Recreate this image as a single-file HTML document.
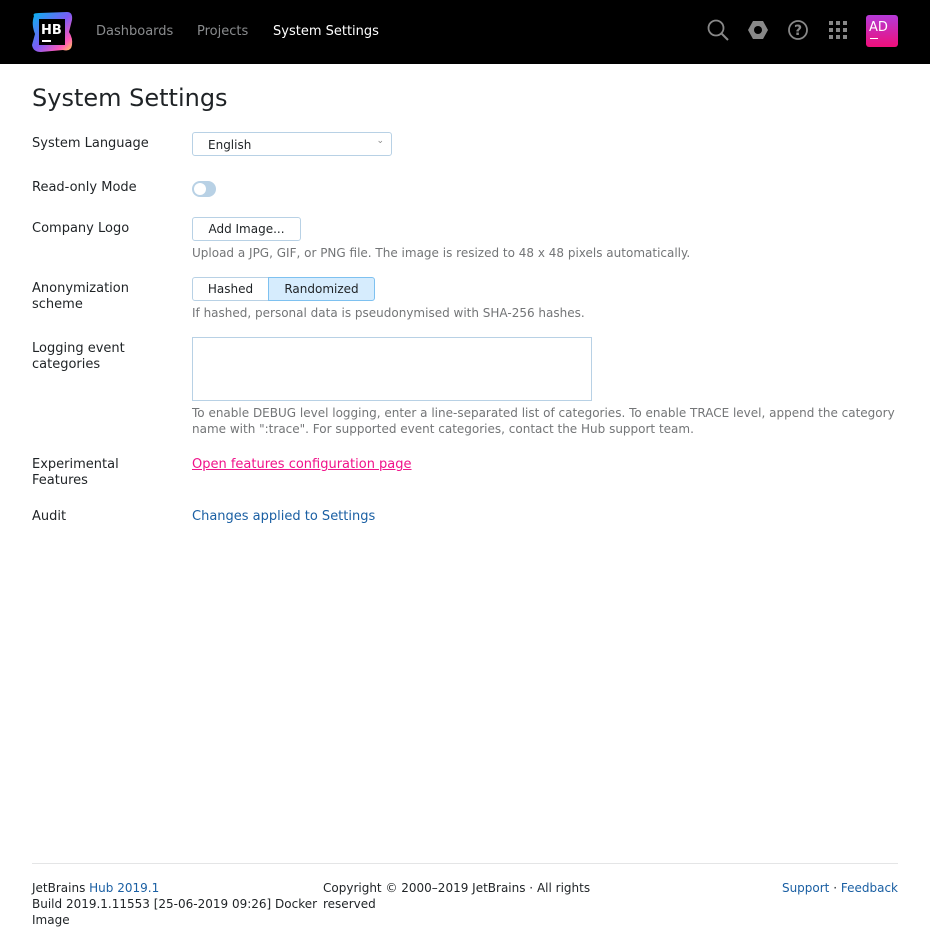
<!DOCTYPE html>
<html><head><meta charset="utf-8"><style>
*{margin:0;padding:0;box-sizing:border-box}
body{width:930px;height:944px;background:#fff;font-family:"DejaVu Sans","Liberation Sans",sans-serif;color:#1f2326;font-size:13px;position:relative;overflow:hidden}
.a{position:absolute;white-space:nowrap}
.hdr{position:absolute;left:0;top:0;width:930px;height:64px;background:#000}
.lbl{position:absolute;left:32px;font-size:13px;line-height:16px;height:16px;color:#1f2326;white-space:nowrap}
.help{font-size:12px;line-height:16px;color:#737577}
</style></head><body>
<div class="hdr">
<svg class="a" style="left:31px;top:12px" width="42" height="41" viewBox="0 0 42 41">
<defs><linearGradient id="g" x1="0" y1="0" x2="1" y2="1"><stop offset="0" stop-color="#00b8f0"/><stop offset="0.5" stop-color="#7b5cf5"/><stop offset="0.8" stop-color="#ff5ab8"/><stop offset="1" stop-color="#ffd84a"/></linearGradient></defs>
<path d="M3 4 Q1 1 8 1 L36 0 Q42 0 41 8 L38 20 Q42 26 41 33 Q40 40 32 38 L10 40 Q2 40 1 33 L4 22 Q0 12 3 4Z" fill="url(#g)"/>
<rect x="8" y="7" width="26" height="26" fill="#000"/>
<text x="10" y="22" fill="#fff" font-family="DejaVu Sans" font-weight="bold" font-size="13">HB</text>
<rect x="11" y="28" width="9" height="2" fill="#fff"/>
</svg>
<div class="a" style="left:96px;top:24px;color:#8a8c8e;font-size:13px">Dashboards</div>
<div class="a" style="left:197px;top:24px;color:#8a8c8e;font-size:13px">Projects</div>
<div class="a" style="left:273px;top:24px;color:#fff;font-size:13px">System Settings</div>
<svg class="a" style="left:706px;top:18px" width="24" height="24" viewBox="0 0 24 24"><circle cx="10" cy="10" r="7.5" fill="none" stroke="#888" stroke-width="1.8"/><path d="M15.5 15.5L22 22" stroke="#888" stroke-width="2"/></svg>
<svg class="a" style="left:747px;top:19px" width="22" height="22" viewBox="0 0 22 22"><path d="M6 2h10l5 9-5 9H6l-5-9z" fill="#888"/><circle cx="11" cy="11" r="4" fill="#000"/></svg>
<svg class="a" style="left:787px;top:19px" width="22" height="22" viewBox="0 0 22 22"><circle cx="11" cy="11" r="9" fill="none" stroke="#888" stroke-width="1.8"/><text x="11" y="16" text-anchor="middle" fill="#888" font-size="14" font-weight="bold" font-family="DejaVu Sans">?</text></svg>
<svg class="a" style="left:828px;top:20px" width="20" height="20" viewBox="0 0 20 20" fill="#888"><rect x="1" y="1" width="4" height="4"/><rect x="8" y="1" width="4" height="4"/><rect x="15" y="1" width="4" height="4"/><rect x="1" y="8" width="4" height="4"/><rect x="8" y="8" width="4" height="4"/><rect x="15" y="8" width="4" height="4"/><rect x="1" y="15" width="4" height="4"/><rect x="8" y="15" width="4" height="4"/><rect x="15" y="15" width="4" height="4"/></svg>
<div class="a" style="left:866px;top:15px;width:32px;height:32px;border-radius:3px;background:linear-gradient(#b53ad8,#ef0f7a)"><div class="a" style="left:3px;top:5px;color:#fff;font-size:13px">AD</div><div class="a" style="left:4px;top:23px;width:8px;height:1px;background:#fff"></div></div>
</div>

<div class="a" style="left:32px;top:84px;font-size:24px;line-height:28px;color:#1f2326">System Settings</div>

<div class="lbl" style="top:136px">System Language</div>
<div class="a" style="left:192px;top:132px;width:200px;height:24px;border:1px solid #b8d1e5;border-radius:3px"><span class="a" style="left:15px;top:4px;font-size:12px;line-height:16px">English</span><span class="a" style="right:7px;top:3px;font-size:9px;color:#888">⌄</span></div>

<div class="lbl" style="top:180px">Read-only Mode</div>
<div class="a" style="left:192px;top:181px;width:24px;height:16px;border-radius:8px;background:#b8d1e5"><div class="a" style="left:2px;top:2px;width:12px;height:12px;border-radius:6px;background:#fff"></div></div>

<div class="lbl" style="top:221px">Company Logo</div>
<div class="a" style="left:192px;top:217px;width:109px;height:24px;border:1px solid #b8d1e5;border-radius:3px;font-size:12px;line-height:22px;text-align:center">Add Image...</div>
<div class="a help" style="left:192px;top:245px">Upload a JPG, GIF, or PNG file. The image is resized to 48 x 48 pixels automatically.</div>

<div class="lbl" style="top:281px">Anonymization</div>
<div class="lbl" style="top:297px">scheme</div>
<div class="a" style="left:192px;top:277px;width:77px;height:24px;border:1px solid #b8d1e5;border-radius:3px 0 0 3px;font-size:12px;line-height:22px;text-align:center">Hashed</div>
<div class="a" style="left:268px;top:277px;width:107px;height:24px;border:1px solid #7ec1f0;background:#d6ecfd;border-radius:0 3px 3px 0;font-size:12px;line-height:22px;text-align:center">Randomized</div>
<div class="a help" style="left:192px;top:305px">If hashed, personal data is pseudonymised with SHA-256 hashes.</div>

<div class="lbl" style="top:341px">Logging event</div>
<div class="lbl" style="top:357px">categories</div>
<div class="a" style="left:192px;top:337px;width:400px;height:64px;border:1px solid #b8d1e5"></div>
<div class="a help" style="left:192px;top:405px">To enable DEBUG level logging, enter a line-separated list of categories. To enable TRACE level, append the category</div>
<div class="a help" style="left:192px;top:421px">name with ":trace". For supported event categories, contact the Hub support team.</div>

<div class="lbl" style="top:457px">Experimental</div>
<div class="lbl" style="top:473px">Features</div>
<div class="a" style="left:192px;top:457px;line-height:16px;color:#f0138a;text-decoration:underline">Open features configuration page</div>

<div class="lbl" style="top:509px">Audit</div>
<div class="a" style="left:192px;top:509px;line-height:16px;color:#1a5fa3">Changes applied to Settings</div>

<div class="a" style="left:32px;top:863px;width:866px;height:1px;background:#e4e5e6"></div>
<div class="a" style="left:32px;top:880px;font-size:12px;line-height:16px">JetBrains <span style="color:#1a5fa3">Hub 2019.1</span></div>
<div class="a" style="left:32px;top:896px;font-size:12px;line-height:16px">Build 2019.1.11553 [25-06-2019 09:26] Docker</div>
<div class="a" style="left:32px;top:912px;font-size:12px;line-height:16px">Image</div>
<div class="a" style="left:323px;top:880px;font-size:12px;line-height:16px">Copyright © 2000–2019 JetBrains · All rights</div>
<div class="a" style="left:323px;top:896px;font-size:12px;line-height:16px">reserved</div>
<div class="a" style="right:32px;top:880px;font-size:12px;line-height:16px"><span style="color:#1a5fa3">Support</span> · <span style="color:#1a5fa3">Feedback</span></div>
</body></html>
